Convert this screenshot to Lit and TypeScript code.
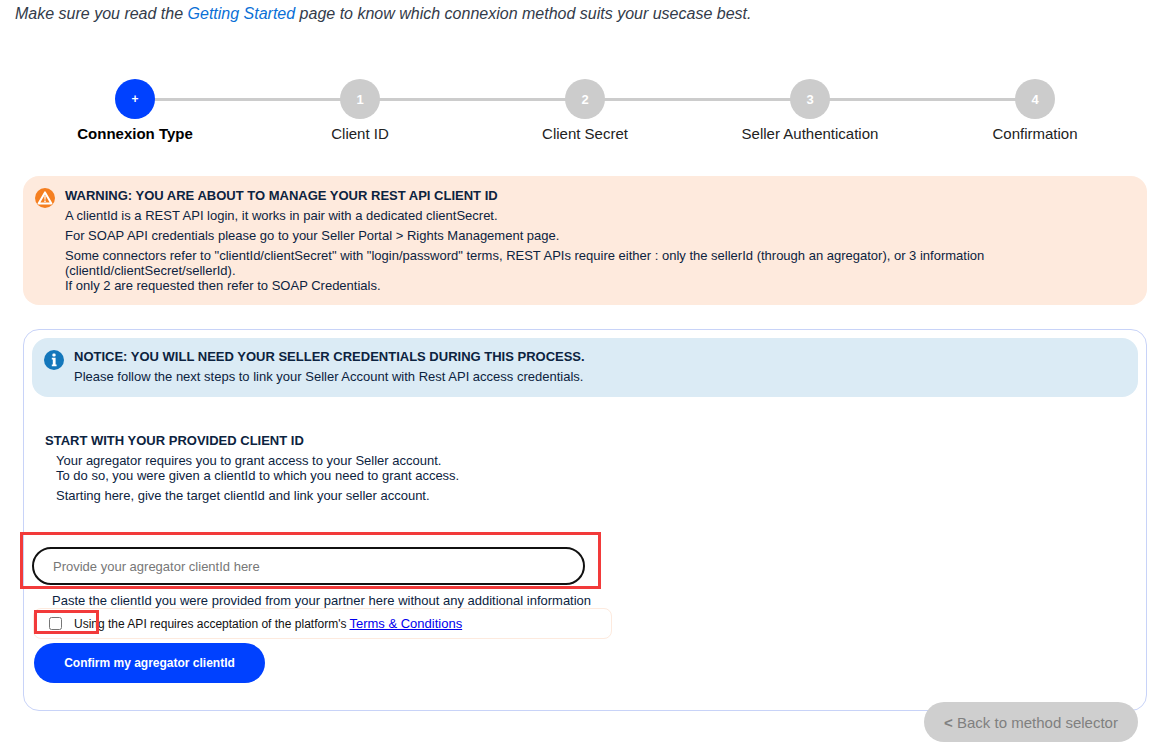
import { LitElement, html, css } from "lit";
import { customElement } from "lit/decorators.js";

const STEPS = [
  { n: "+", label: "Connexion Type", active: true },
  { n: "1", label: "Client ID" },
  { n: "2", label: "Client Secret" },
  { n: "3", label: "Seller Authentication" },
  { n: "4", label: "Confirmation" },
];

@customElement("app-root")
export class AppRoot extends LitElement {
  static styles = css`
    :host {
      display: block;
      height: 755px;
      overflow: hidden;
      background: #fff;
      font-family: "Liberation Sans", Arial, sans-serif;
      color: #0c2340;
      box-sizing: border-box;
      position: relative;
    }
    * { box-sizing: border-box; }
    .intro {
      margin: 0;
      padding: 5px 0 0 15px;
      height: 79px;
      font-size: 16px;
      line-height: 18px;
      font-style: italic;
      color: #333b4a;
    }
    .intro a { color: #0a6fd6; text-decoration: none; }
    .stepper {
      display: grid;
      grid-template-columns: repeat(5, 225px);
      margin-left: 22.5px;
      height: 97px;
    }
    .step {
      position: relative;
      display: flex;
      flex-direction: column;
      align-items: center;
      font-size: 15px;
      color: #222;
    }
    .step + .step::before {
      content: "";
      position: absolute;
      top: 19px;
      right: 50%;
      width: 100%;
      height: 3px;
      background: #ccc;
    }
    .dot {
      position: relative;
      z-index: 1;
      width: 40px;
      height: 40px;
      border-radius: 50%;
      background: #ccc;
      color: #fff;
      font-size: 13px;
      font-weight: 700;
      display: flex;
      align-items: center;
      justify-content: center;
      margin-bottom: 6px;
    }
    .step.active .dot { background: #0041ff; font-size: 12px; }
    .step.active { font-weight: 700; color: #000; }
    .step span.label { line-height: 18px; }
    .alert {
      display: flex;
      gap: 10px;
      border-radius: 16px;
      font-size: 13px;
      line-height: 15px;
      color: #0c2340;
    }
    .alert h4 {
      margin: 0 0 4px;
      font-size: 13px;
      line-height: 17px;
      font-weight: 700;
    }
    .alert p { margin: 0 0 5px; }
    .alert p:last-child { margin: 0; }
    .alert svg { flex: none; margin-top: 1px; }
    .warning {
      margin: 0 12px 24px 23px;
      height: 129px;
      padding: 11px 12px 0 12px;
      background: #feeadd;
    }
    .card {
      position: relative;
      margin: 0 12px 0 23px;
      height: 382px;
      border: 1px solid #c8d3f8;
      border-radius: 16px;
      padding: 8px;
    }
    .notice {
      height: 59px;
      padding: 10px 12px 0 12px;
      background: #dbebf5;
    }
    .notice svg { margin-top: 2px; }
    .section {
      padding: 35px 0 0 13px;
      font-size: 13px;
      line-height: 15px;
    }
    .section h5 {
      margin: 0 0 4px;
      font-size: 13px;
      line-height: 17px;
      font-weight: 700;
    }
    .section .body { padding-left: 11px; }
    .section p { margin: 0 0 5px; }
    .field { margin: 44px 0 0 0; }
    .input {
      display: block;
      width: 553px;
      height: 38px;
      border: 2px solid #111;
      border-radius: 19px;
      padding: 0 19px;
      font: 13px "Liberation Sans", Arial, sans-serif;
      background: #fff;
      outline: none;
    }
    .input::placeholder { color: #777; opacity: 1; }
    .hint {
      margin: 8px 0 0 20px;
      font-size: 13px;
      line-height: 15px;
      color: #0c2340;
    }
    .terms {
      display: flex;
      align-items: center;
      width: 579px;
      height: 31px;
      margin: 0 0 4px 1px;
      padding: 0 0 1px 14px;
      border: 1px solid #fdeade;
      border-radius: 8px;
      font-size: 12px;
      color: #111;
    }
    .terms input { width: 13px; height: 13px; margin: 1px 12px 0 1px; }
    .terms a { color: #0000ee; margin-left: 3px; text-decoration: underline; font-size: 13px; }
    .primary {
      display: block;
      width: 231px;
      height: 40px;
      margin-left: 2px;
      border: 0;
      border-radius: 20px;
      background: #0041ff;
      color: #fff;
      font: 700 12px "Liberation Sans", Arial, sans-serif;
    }
    .back {
      position: absolute;
      right: 8px;
      bottom: -32px;
      width: 214px;
      height: 40px;
      border: 0;
      border-radius: 20px;
      background: #cfcfcf;
      color: #808080;
      font: 15px "Liberation Sans", Arial, sans-serif;
    }
    .back b { font-weight: 700; }
    .mark {
      position: absolute;
      border: 3px solid #f23a3a;
      pointer-events: none;
    }
    .mark.a { left: -4px; top: 202px; width: 581px; height: 57px; }
    .mark.b { left: 10px; top: 280px; width: 65px; height: 24px; }
  `;

  private warnIcon() {
    return html`<svg width="20" height="20" viewBox="0 0 20 20">
      <circle cx="10" cy="10" r="10" fill="#f57f20"></circle>
      <path d="M10 4.4 L16.4 15.4 H3.6 Z" fill="#f57f20" stroke="#fff" stroke-width="2" stroke-linejoin="round"></path>
      <path d="M9.3 7.6h1.4l-.2 4.2h-1z M9.3 12.4h1.4v1.6H9.3z" fill="#fff"></path>
    </svg>`;
  }

  private infoIcon() {
    return html`<svg width="20" height="20" viewBox="0 0 20 20">
      <circle cx="10" cy="10" r="10" fill="#1477bb"></circle>
      <rect x="8.4" y="3.4" width="3.2" height="3" rx="1.2" fill="#fff"></rect>
      <path d="M7.8 7.8h3.8v6.8h1v1.6H7.8v-1.6h1V9.4h-1z" fill="#fff"></path>
    </svg>`;
  }

  render() {
    return html`
      <p class="intro">
        Make sure you read the <a href="#">Getting Started</a> page to know which connexion method suits your usecase best.
      </p>
      <div class="stepper">
        ${STEPS.map(
          (s) => html`<div class="step ${s.active ? "active" : ""}">
            <div class="dot">${s.n}</div>
            <span class="label">${s.label}</span>
          </div>`
        )}
      </div>
      <div class="alert warning">
        ${this.warnIcon()}
        <div>
          <h4>WARNING: YOU ARE ABOUT TO MANAGE YOUR REST API CLIENT ID</h4>
          <p>A clientId is a REST API login, it works in pair with a dedicated clientSecret.</p>
          <p>For SOAP API credentials please go to your Seller Portal &gt; Rights Management page.</p>
          <p>Some connectors refer to "clientId/clientSecret" with "login/password" terms, REST APIs require either : only the sellerId (through an agregator), or 3 information (clientId/clientSecret/sellerId).<br />If only 2 are requested then refer to SOAP Credentials.</p>
        </div>
      </div>
      <div class="card">
        <div class="alert notice">
          ${this.infoIcon()}
          <div>
            <h4>NOTICE: YOU WILL NEED YOUR SELLER CREDENTIALS DURING THIS PROCESS.</h4>
            <p>Please follow the next steps to link your Seller Account with Rest API access credentials.</p>
          </div>
        </div>
        <div class="section">
          <h5>START WITH YOUR PROVIDED CLIENT ID</h5>
          <div class="body">
            <p>Your agregator requires you to grant access to your Seller account.<br />To do so, you were given a clientId to which you need to grant access.</p>
            <p>Starting here, give the target clientId and link your seller account.</p>
          </div>
        </div>
        <div class="field">
          <input class="input" placeholder="Provide your agregator clientId here" />
          <div class="hint">Paste the clientId you were provided from your partner here without any additional information</div>
        </div>
        <label class="terms">
          <input type="checkbox" />
          <span>Using the API requires acceptation of the platform's<a href="#">Terms &amp; Conditions</a></span>
        </label>
        <button class="primary">Confirm my agregator clientId</button>
        <div class="mark a"></div>
        <div class="mark b"></div>
        <button class="back"><b>&lt;</b> Back to method selector</button>
      </div>
    `;
  }
}
